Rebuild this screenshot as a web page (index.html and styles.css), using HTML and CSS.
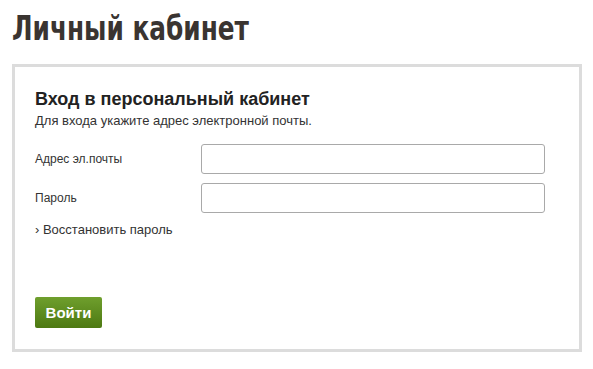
FILE: index.html
```html
<!DOCTYPE html>
<html lang="ru">
<head>
    <meta charset="UTF-8">
    <meta name="viewport" content="width=device-width, initial-scale=1.0">
    <title>Личный кабинет</title>
    <link rel="stylesheet" href="styles.css">
</head>
<body>
    <h1 class="page-title"><span>Личный кабинет</span></h1>

    <div class="login-box">
        <h2 class="login-title">Вход в персональный кабинет</h2>
        <p class="login-hint">Для входа укажите адрес электронной почты.</p>

        <form class="login-form">
            <div class="form-row">
                <label for="email">Адрес эл.почты</label>
                <input type="text" id="email">
            </div>
            <div class="form-row">
                <label for="password">Пароль</label>
                <input type="password" id="password">
            </div>
            <a class="restore-link" href="#">› Восстановить пароль</a>

            <button type="submit" class="login-btn">Войти</button>
        </form>
    </div>
</body>
</html>
```

FILE: styles.css
```css
body {
    font-family: 'Liberation Sans', Arial, sans-serif;
    margin: 0;
    padding: 0 11px 0 12px;
    background: #fff;
    color: #333;
}

.page-title {
    font-family: 'DejaVu Sans Condensed', 'DejaVu Sans', sans-serif;
    font-size: 34px;
    font-weight: bold;
    color: #3a3431;
    margin: 0;
    padding-top: 9px;
    line-height: 38px;
    height: 55px;
}

/* the original uses a narrow display face, squeeze the condensed one */
.page-title span {
    display: inline-block;
    transform: scaleX(0.81);
    transform-origin: left center;
}

.login-box {
    border: 3px solid #dcdcdc;
    height: 282px;
    padding: 0 20px;
}

.login-title {
    font-size: 18px;
    font-weight: bold;
    color: #222;
    margin: 22px 0 0;
    line-height: 20px;
}

.login-hint {
    font-size: 13px;
    margin: 4px 0 0;
    line-height: 16px;
    color: #333;
}

.login-form {
    margin-top: 15px;
}

.form-row {
    display: flex;
    align-items: center;
    margin-bottom: 9px;
}

.form-row label {
    width: 166px;
    font-size: 12px;
    color: #333;
}

.form-row input {
    width: 344px;
    height: 30px;
    box-sizing: border-box;
    border: 1px solid #a9a9a9;
    border-radius: 3px;
    margin: 0;
    padding: 0 6px;
    font-size: 13px;
}

.restore-link {
    display: block;
    font-size: 13px;
    color: #333;
    text-decoration: none;
    margin-top: 9px;
    line-height: 16px;
}

.login-btn {
    display: block;
    margin-top: 59px;
    width: 67px;
    height: 31px;
    border: none;
    border-radius: 2px;
    background: linear-gradient(to bottom, #6f9f2d, #4d7912);
    color: #fff;
    font-family: 'Liberation Sans', Arial, sans-serif;
    font-size: 15px;
    font-weight: bold;
    padding: 0;
    cursor: pointer;
}
```
